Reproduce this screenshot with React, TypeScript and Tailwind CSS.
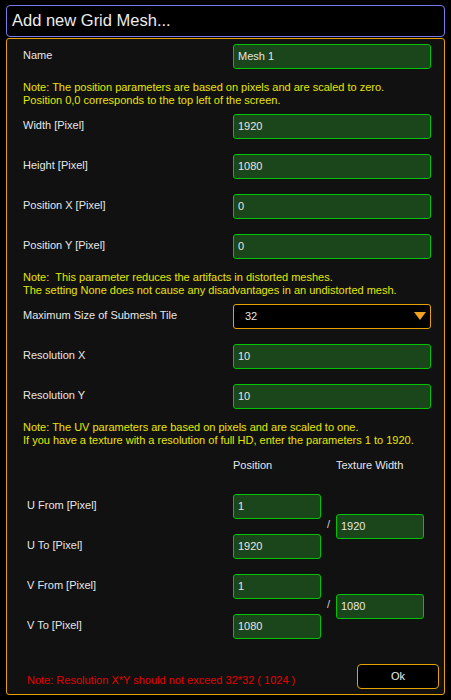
const font = { fontFamily: '"Liberation Sans", Arial, sans-serif' };

const Field = ({ value, className = 'w-[198px]' }: { value: string; className?: string }) => (
  <div
    className={`${className} h-[25px] flex items-center pl-[4px] rounded-[3px] border border-[#00c400] bg-[#1b451b] text-[11px] text-[#e6e6e6]`}
  >
    {value}
  </div>
);

const Row = ({ label, value }: { label: string; value: string }) => (
  <div className="flex items-center justify-between pl-[16px] pr-[13px] h-[25px]">
    <span className="text-[11px] text-[#e6e6e6] -mt-[3px]">{label}</span>
    <Field value={value} />
  </div>
);

const Note = ({ lines, className }: { lines: string[]; className: string }) => (
  <div className={`pl-[16px] text-[11px] leading-[13px] text-[#e6e600] ${className}`}>
    {lines.map((l) => (
      <div key={l} className="whitespace-pre">
        {l}
      </div>
    ))}
  </div>
);

const UvPair = ({ a, b, tex }: { a: [string, string]; b: [string, string]; tex: string }) => (
  <div className="flex items-center pr-[20px]">
    <div className="flex-1 flex flex-col gap-[15px]">
      {[a, b].map(([label, value]) => (
        <div key={label} className="flex items-center justify-between h-[25px] pl-[20px]">
          <span className="text-[11px] text-[#e6e6e6] -mt-[3px]">{label}</span>
          <Field value={value} className="w-[88px]" />
        </div>
      ))}
    </div>
    <div className="w-[15px] text-center text-[11px] text-[#d0d0d0] -mt-[4px]">/</div>
    <Field value={tex} className="w-[88px]" />
  </div>
);

export default function App() {
  return (
    <div className="bg-black h-[700px] w-[451px] pt-[5px] px-[6px]" style={font}>
      <div className="h-[32px] rounded-[4px] border border-[#7a7aef] bg-black flex items-center pl-[5px] text-[16.5px] text-[#ececec] pb-[1px]">
        Add new Grid Mesh...
      </div>
      <div className="mt-[1px] h-[657px] rounded-[3px] border border-[#e6a200] bg-[#111111] pt-[5px] flex flex-col">
        <Row label="Name" value="Mesh 1" />
        <Note
          className="mt-[12px]"
          lines={[
            'Note: The position parameters are based on pixels and are scaled to zero.',
            'Position 0,0 corresponds to the top left of the screen.',
          ]}
        />
        <div className="mt-[7px] flex flex-col gap-[15px]">
          <Row label="Width [Pixel]" value="1920" />
          <Row label="Height [Pixel]" value="1080" />
          <Row label="Position X [Pixel]" value="0" />
          <Row label="Position Y [Pixel]" value="0" />
        </div>
        <Note
          className="mt-[12px]"
          lines={[
            'Note:  This parameter reduces the artifacts in distorted meshes.',
            'The setting None does not cause any disadvantages in an undistorted mesh.',
          ]}
        />
        <div className="mt-[7px] flex items-center justify-between pl-[16px] pr-[13px] h-[25px]">
          <span className="text-[11px] text-[#e6e6e6] -mt-[3px]">Maximum Size of Submesh Tile</span>
          <div className="w-[198px] h-[25px] rounded-[3px] border border-[#e6a200] bg-black flex items-center justify-between pl-[11px] pr-[4px] text-[11px] text-[#e6e6e6]">
            <span>32</span>
            <svg width="12" height="9" viewBox="0 0 12 9">
              <polygon points="0,0 12,0 6,8" fill="#f0a21e" />
            </svg>
          </div>
        </div>
        <div className="mt-[15px] flex flex-col gap-[15px]">
          <Row label="Resolution X" value="10" />
          <Row label="Resolution Y" value="10" />
        </div>
        <Note
          className="mt-[12px]"
          lines={[
            'Note: The UV parameters are based on pixels and are scaled to one.',
            'If you have a texture with a resolution of full HD, enter the parameters 1 to 1920.',
          ]}
        />
        <div className="mt-[12px] flex pr-[20px] text-[11px] text-[#e6e6e6] h-[13px] leading-[13px]">
          <div className="flex-1" />
          <div className="w-[88px]">Position</div>
          <div className="w-[15px]" />
          <div className="w-[88px]">Texture Width</div>
        </div>
        <div className="mt-[22px] flex flex-col gap-[15px]">
          <UvPair a={['U From [Pixel]', '1']} b={['U To [Pixel]', '1920']} tex="1920" />
          <UvPair a={['V From [Pixel]', '1']} b={['V To [Pixel]', '1080']} tex="1080" />
        </div>
        <div className="mt-auto flex items-end justify-between pl-[20px] pr-[5px] pb-[5px]">
          <span className="text-[11px] text-[#e60000] mb-[1px]">
            Note: Resolution X*Y should not exceed 32*32 ( 1024 )
          </span>
          <div className="w-[82px] h-[25px] rounded-[4px] border border-[#e6a200] bg-black flex items-center justify-center text-[11px] text-[#ececec]">
            Ok
          </div>
        </div>
      </div>
    </div>
  );
}
